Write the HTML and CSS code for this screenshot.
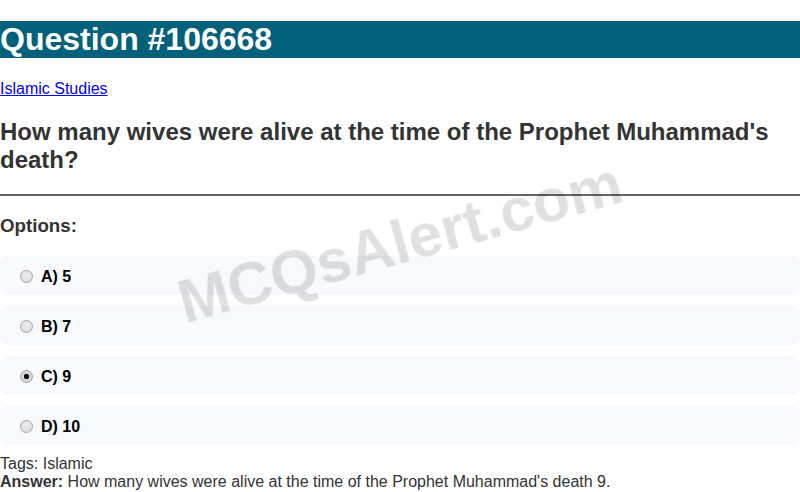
FILE: index.html
```html
<!DOCTYPE html>
<html>
<head>
<meta charset="utf-8">
<link rel="stylesheet" href="styles.css">
</head>
<body>
<h1 class="title">Question #106668</h1>
<p class="cat"><a href="#">Islamic Studies</a></p>
<h2 class="question">How many wives were alive at the time of the Prophet Muhammad's death?</h2>
<hr class="rule">
<h3 class="opts-head">Options:</h3>
<div class="options">
  <div class="option"><label><input type="radio" name="o" class="radio"> A) 5</label></div>
  <div class="option"><label><input type="radio" name="o" class="radio"> B) 7</label></div>
  <div class="option"><label><input type="radio" name="o" class="radio" checked> C) 9</label></div>
  <div class="option"><label><input type="radio" name="o" class="radio"> D) 10</label></div>
</div>
<div class="meta">Tags: Islamic</div>
<div class="meta"><b>Answer:</b> How many wives were alive at the time of the Prophet Muhammad's death 9.</div>
<div class="watermark">MCQsAlert.com</div>
</body>
</html>
```

FILE: styles.css
```css
html, body {
  margin: 0;
  padding: 0;
  background: #fff;
  font-family: "Liberation Sans", Arial, sans-serif;
  color: #333;
}
.title {
  margin: 21.44px 0;
  font-size: 32px;
  font-weight: bold;
  background: #01607a;
  color: #fff;
}
.cat {
  margin: 16px 0;
  font-size: 16px;
}
.cat a {
  color: #0000ee;
}
.question {
  margin: 19.92px 0;
  font-size: 24px;
  font-weight: bold;
  color: #333;
}
.rule {
  margin: 0;
  border: 0;
  height: 2px;
  background: #666;
}
.opts-head {
  margin: 19px 0 19px;
  font-size: 18.72px;
  color: #333;
}
.options {
  display: flex;
  flex-direction: column;
  gap: 11px;
}
.option {
  background: #f8f9fc;
  border-radius: 8px;
  height: 39px;
  box-sizing: border-box;
  padding: 12px 15px 0;
  font-weight: bold;
  font-size: 16px;
  line-height: 18px;
  color: #000;
}
.option label {
  display: flex;
  align-items: center;
}
.radio {
  appearance: none;
  -webkit-appearance: none;
  margin: 0 8px 0 5px;
  width: 13px;
  height: 13px;
  box-sizing: border-box;
  border: 1px solid #a4a4a4;
  border-radius: 50%;
  background: radial-gradient(circle at 50% 40%, #eeeeee 0%, #d8d8d8 100%);
}
.radio:checked {
  background: radial-gradient(circle, #111 0, #111 2.5px, #d8d8d8 3px, #d0d0d0 100%);
}
.meta {
  font-size: 16px;
  line-height: 18px;
  color: #333;
}
.options + .meta {
  margin-top: 10px;
}
.watermark {
  position: fixed;
  left: 50%;
  top: calc(50% - 4px);
  transform: translate(-50%, -50%) rotate(-15.5deg);
  font-size: 61px;
  font-weight: bold;
  color: rgba(0, 0, 0, 0.12);
  white-space: nowrap;
  pointer-events: none;
}
```
